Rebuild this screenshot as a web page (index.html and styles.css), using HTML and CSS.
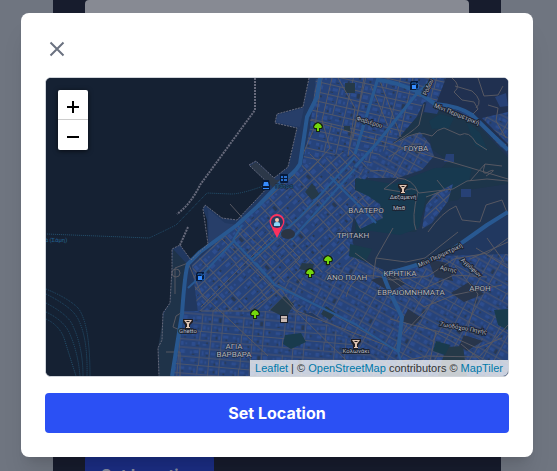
FILE: index.html
```html
<!DOCTYPE html>
<html lang="en">
<head>
<meta charset="utf-8">
<meta name="viewport" content="width=device-width, initial-scale=1">
<title>Set Location</title>
<link rel="stylesheet" href="styles.css">
</head>
<body>
<div class="page">
  <div class="page-column" aria-hidden="true">
    <div class="page-field"></div>
    <div class="page-button">Set Location</div>
  </div>
  <div class="overlay">
    <section class="dialog" role="dialog" aria-modal="true" aria-label="Set Location">
      <button class="close" type="button" aria-label="Close">
        <svg viewBox="0 0 24 24" aria-hidden="true"><path d="M5.500 5.500l13 13M18.500 5.500l-13 13"/></svg>
      </button>
      <div class="map">
        <svg class="tiles" viewBox="0 0 462 298" preserveAspectRatio="xMidYMid slice" role="img" aria-label="Map of the city and its harbour">
          <defs>
            <pattern id="blocks" width="46" height="38" patternUnits="userSpaceOnUse">
              <path fill="#26437b" d="M0 0h46v38H0z"/>
              <path fill="#2d4d8e" d="M2 2h3v3h-3zM7 3h2v5h-2zM13 2h5v3h-5zM20 5h2v3h-2zM25 2h4v2h-4zM32 3h2v4h-2zM37 2h6v3h-6zM3 12h4v4h-4zM10 11h2v3h-2zM15 13h4v2h-4zM25 11h3v5h-3zM30 13h3v2h-3zM37 12h3v4h-3zM42 13h2v2h-2zM2 22h2v3h-2zM6 21h5v3h-5zM15 21h2v5h-2zM19 22h3v2h-3zM25 22h5v3h-5zM37 21h5v4h-5zM3 31h5v3h-5zM14 31h3v4h-3zM19 32h2v3h-2zM26 31h3v2h-3zM31 32h3v3h-3zM38 31h3v4h-3z"/>
              <path fill="#283852" d="M5 6h2v2h-2zM17 6h3v1h-3zM29 4h2v3h-2zM40 6h2v2h-2zM8 15h3v1h-3zM19 11h2v2h-2zM33 15h2v1h-2zM4 25h3v1h-3zM20 25h2v2h-2zM31 21h3v5h-3zM8 34h2v1h-2zM29 34h2v2h-2zM41 31h2v2h-2z"/>
              <path fill="none" stroke="#50576a" d="M0 9.500h46M0 18.500h46M0 28.500h46M0 37.500h46M11.500 0v9M23.500 0v38M35.500 0v38M12.500 18v20"/>
            </pattern>
            <pattern id="north" href="#blocks" patternTransform="rotate(13)"/>
            <pattern id="centre" href="#blocks" patternTransform="rotate(-43)"/>
            <pattern id="east" href="#blocks" patternTransform="rotate(29) scale(.9)"/>
            <pattern id="south" href="#blocks" patternTransform="rotate(5) scale(.9)"/>
            <g id="tree"><path fill="#16230c" d="M-5 0Q-5-4 0-5Q5-4 5 0L4 2H2V5H-2V2H-4z"/><path fill="#73d70c" d="M-4 0Q-3-3 0-4Q3-3 4 0L3 1H1V4H-1V1H-3z"/></g>
            <g id="glass"><path fill="#211d22" d="M-5-5H5V-2L2 1V5H-3V1L-5-2z"/><path fill="#e0c5b4" d="M-4-4H4L1 0V3H2V4H-2V3H-1V0zM-2-3H2L1-2H-1z" fill-rule="evenodd"/></g>
            <g id="ferry-stop"><path fill="#071a3b" d="M-3-5H3L4-1V5H-4V-1z"/><path fill="#368cff" d="M-2-3H2L3 1H-3z"/><path stroke="#368cff" d="M-3 3.500H3"/></g>
            <g id="rail-stop"><rect x="-4" y="-5" width="8" height="9" rx="1" fill="#071a3b"/><path fill="#286ecb" d="M-3-3H-1V-1H-3zM0-3H3V-1H0zM-3 0H-1V2H-3zM0 0H3V2H0z"/></g>
            <g id="pump"><path fill="#071a3b" d="M-4-5H3V4H-5V-3z"/><path fill="#368cff" d="M-3-1H1V3H-3z"/><path fill="none" stroke="#2365b7" d="M-3-2V-3H1V-1M2-3Q5-2 3 3H1"/></g>
          </defs>
          <path fill="#152133" d="M0 0h462v298H0z"/>

          <path fill="#213860" d="M263 0L257 29 231 36 229 45 251 50 242 89 228 100 210 83 203 87 224 107 191 142 176 140 159 127 157 131 161 142 162 166 145 182 134 167 126 171 126 190 124 225 117 235 116 262 112 270 113 298H462V0z"/>
          <path fill="url(#north)" d="M270 0H462V66L330 132 254 96 264 50z"/>
          <path fill="url(#centre)" d="M254 88L309 70 350 130 350 200 300 235H152L146 187 191 145z"/>
          <path fill="url(#south)" d="M138 233H250L352 272 356 298H127z"/>
          <path fill="url(#east)" d="M229 207L330 180 462 176V298H350z"/>
          <path fill="url(#north)" d="M350 80L384 66 392 86 365 100 345 98z"/>

          <path fill="#1f3349" d="M127 171L140 185 135 238 126 298H113L112 270 118 235 124 225z"/>
          <path fill="#203451" d="M348 65L370 40 378 24 400 28 430 42 462 77V137L438 150 415 169 376 185 340 193 310 180 305 154 309 132 330 113 318 103z"/>
          <path fill="#1d354a" d="M370 40L384 32 405 36 430 45 462 80V106L421 112 412 122 380 127 370 154 309 152 309 101 343 112 361 101 392 94 402 83 386 71 383 56 350 65z"/>
          <path fill="#17394f" d="M310 100L347 106 389 90 426 89 423 103 399 115 380 120 373 150 354 157 325 153 310 160zM383 43L394 36 408 40 403 50 386 51zM420 43L434 55 442 73 429 68z"/>
          <path fill="#203050" d="M400 0H462V68L426 37 390 26z"/>
          <path fill="url(#east)" d="M345 66L374 54 384 66 388 78 376 92 352 100 322 100 318 92zM436 40L462 34V66zM305 88L322 92 309 101z"/>
          <path fill="url(#centre)" d="M388 116L407 106 402 123 386 145 376 151 380 127zM305 133L309 112 322 118 334 126 337 140 314 151z"/>
          <path fill="#274176" d="M381 22L395 27 391 36 378 34zM449 19L460 15 462 28 454 29zM400 76h8v8h-10zM415 111h10v8h-10z"/>

          <path fill="#253948" d="M266 105l8 12-8 5-7-8zM238 218l10 8-8 14-16-8zM256 185l12 1-2 8-13-3zM299 5h10v10h-10zM298 48h6v5h-6zM280 228l10 7-6 7-9-6zM400 269l17-1 4 30H392z"/>
          <path fill="#193b4d" d="M448 232l14-1v21l-10-5zM390 263l14 4-5 10-12-4zM239 257l16-2 5 9-15 7-8-5zM304 166l22 5-6 12-17-5z"/>
          <path fill="#28354b" d="M325 202l24-8 10 12-15 8zM382 181l20 4 5 18-18-4zM405 215l18-11 15 12-20 8zM362 231l14 9-8 8-12-5zM418 257l19 6-16 10-8-5z"/>
          <path fill="#273e69" d="M258 30L232 37 230 44 254 49zM162 131L179 145 192 147 172 163 163 164z"/>
          <path fill="#2c3849" d="M210 84L204 88 229 111 239 101 230 102z"/>

          <g class="minor-roads">
            <path d="M276 0L269 48 248 97 196 144M286 0L276 42 284 70 263 93M264 42L462 101M264 76L330 141M292 0L309 30 302 78M318 0L307 60M325 8L345 55M333 0L355 59"/>
            <path d="M143 187L155 215 222 278M155 233H203L235 211 251 233 352 272M142 185L129 190 129 216M138 233L130 238 127 249 136 253M120 274h14v24M155 229L229 155 254 180 204 231M184 126L257 207M191 147L229 182M173 158L302 284"/>
            <path d="M348 65Q365 55 373 47L378 26M354 63Q370 51 386 58Q391 51 398 50L414 57Q423 52 430 65L441 72M343 79Q363 64 375 66M324 93Q343 90 352 100L338 111 356 114Q367 107 373 115L407 111 421 103 441 101 462 103M352 100Q367 101 372 114Q365 140 370 152M424 103L439 86 456 88M439 86Q434 100 444 93Q453 90 440 98"/>
            <path d="M406 0Q416 8 408 14L416 22 428 24 432 31 425 38M409 8L426 13Q438 23 430 30M432 0L438 18 452 17 457 8M442 27L452 30 450 43 460 60M391 102L399 112 380 119M382 154Q396 134 410 128L416 142 434 144 440 127 456 122 462 137"/>
            <path d="M300 219Q308 188 345 202L382 198 408 181 442 175 462 160M309 175L353 207 378 229 408 217 456 207M344 241L398 255 431 270 456 260M353 284L381 278 433 279 462 247M409 188L432 216 419 258M327 200L330 180 347 150M330 180L360 184 379 180 412 154M340 194Q361 207 373 213L408 197 441 199M358 255L375 237 396 214M390 253L381 298M415 266L454 298M430 170L462 190M424 181L462 164M441 160L458 184"/>
            <circle cx="130" cy="195" r="4"/>
          </g>
          <g class="main-roads">
            <path stroke-width="4" d="M274 0L271 19 261 39 254 86Q248 96 237 102L211 129 191 147 154 174 142 186Q139 193 136 236L126 298"/>
            <path stroke-width="2" d="M142 210L154 199 189 162M187 162L229 207 309 246 352 274 360 298M196 147L187 162M206 181L254 139 309 79M245 162L309 91M332 0L309 76M388 0L372 14M229 207L210 185M284 99L330 145"/>
            <path stroke-width="3" d="M372 14L332 64 309 89M332 0L309 76"/>
            <path stroke-width="4" d="M332 2Q351 4 372 14L389 26Q413 28 426 37L462 72M462 134L441 147Q420 162 407 171Q376 188 337 196M337 196Q342 211 356 239L352 274"/>
          </g>
          <g class="coast">
            <path stroke-width="2" d="M209 0V32L154 107Q145 126 131 136M142 149L134 167"/>
            <path d="M263 0L257 29 231 36 229 45 251 50 242 89 228 100 210 83 203 87 224 107 191 142 176 140 159 127 157 131 162 166 145 182 134 167 126 171 126 190 124 225 117 235 116 262 112 270 113 298"/>
          </g>
          <path class="ferry" d="M220 107Q196 116 185 116L161 115 130 147Q114 155 103 160L0 156M0 211Q22 220 32 230Q44 245 44 298M0 216Q24 228 31 239Q42 258 41 298M0 225Q21 236 26 246Q37 268 37 298M0 234Q17 242 23 254Q32 274 34 298M0 241Q13 247 18 260L30 298"/>

          <ellipse cx="242" cy="156" rx="7" ry="5" fill="#2b3443"/>
          <g class="district">
            <text x="370" y="73">ΓΟΥΒΑ</text><text x="320" y="135">ΒΛΑΤΕΡΟ</text><text x="307" y="160">ΤΡΙΤΑΚΗ</text>
            <text x="301" y="202">ΑΝΟ ΠΟΛΗ</text><text x="354" y="198">ΚΡΗΤΙΚΑ</text><text x="365" y="217">ΕΒΡΑΙΟΜΝΗΜΑΤΑ</text>
            <text x="434" y="213">ΑΡΟΗ</text><text x="188" y="271">ΑΓΙΑ</text><text x="188" y="279">ΒΑΡΒΑΡΑ</text>
          </g>
          <g class="street">
            <text transform="translate(323 46) rotate(17)">Φαβιέρου</text><text transform="translate(384 10) rotate(-65)">Ρόδου</text>
            <text transform="translate(410 38) rotate(22)">Μίνι Περιμετρική</text><text transform="translate(395 179) rotate(-25)">Μίνι Περιμετρική</text>
            <text transform="translate(402 193) rotate(12)">Αρτης</text><text transform="translate(424 191) rotate(42)">Αγράφων</text>
            <text transform="translate(417 252) rotate(10)">Ζωοδόχου Πηγής</text><text x="357" y="121">Δεξαμενή</text><text x="353" y="132">Μπθ</text>
            <text x="142" y="255">Ghetto</text><text x="310" y="275">Κολωνάκι</text>
          </g>
          <g class="water-label"><text x="9" y="164">ιά (Σάμη)</text><text x="238" y="110">Πάτρα</text></g>
          <use href="#tree" x="272" y="49"/><use href="#tree" x="282" y="182"/><use href="#tree" x="264" y="195"/><use href="#tree" x="209" y="236"/>
          <use href="#ferry-stop" x="220" y="107"/><use href="#rail-stop" x="238" y="101"/><use href="#pump" x="155" y="199"/><use href="#pump" x="369" y="8"/>
          <use href="#glass" x="357" y="111"/><use href="#glass" x="142" y="246"/><use href="#glass" x="310" y="266"/>
          <path fill="#171c29" d="M234 237h8v8h-8z"/><path fill="#c9b9b2" d="M235 238h6v6h-6z"/><path stroke="#857c7d" d="M235 240.500h6"/>
          <g><path fill="#fb315e" d="M231 160L225 148A7.500 7.500 0 1 1 237 148z"/><circle cx="231" cy="144" r="6" fill="#263b62"/><circle cx="231" cy="142" r="2" fill="#f2c3aa"/><path fill="#8bd7f7" d="M228 148v-2q0-2 3-2t3 2v2z"/></g>
        </svg>
        <div class="zoom-control">
          <button type="button" aria-label="Zoom in"><svg viewBox="0 0 12 12" aria-hidden="true"><path d="M0 6h12M6 0v12"/></svg></button>
          <button type="button" aria-label="Zoom out"><svg viewBox="0 0 12 12" aria-hidden="true"><path d="M0 6h12"/></svg></button>
        </div>
        <div class="attribution"><a href="#leaflet">Leaflet</a> | © <a href="#osm">OpenStreetMap</a> contributors © <a href="#maptiler">MapTiler</a></div>
      </div>
      <button class="submit" type="button">Set Location</button>
    </section>
  </div>
</div>
</body>
</html>
```
FILE: styles.css
```css
* {
  box-sizing: border-box;
}

body {
  margin: 0;
  background: #6f7580;
  font-family: Inter, "Liberation Sans", sans-serif;
}

button {
  font: inherit;
  border: 0;
  padding: 0;
  cursor: pointer;
}

.page {
  display: grid;
  height: 100vh;
  padding-right: 3px;
  overflow: hidden;
}

.page-column,
.overlay {
  grid-area: 1 / 1;
  min-height: 0;
}

.page-column {
  display: flex;
  flex-direction: column;
  align-items: flex-start;
  justify-content: space-between;
  width: 100%;
  max-width: 448px;
  margin: 0 auto;
  padding: 0 32px;
  background: #171c2d;
}

.page-field {
  width: 100%;
  height: 80px;
  border-radius: 4px;
  background: #878a93;
}

.page-button {
  height: 14px;
  padding: 8px 16px;
  border-radius: 4px 4px 0 0;
  background: #1b2d83;
  color: #858b9f;
  font-weight: 700;
  font-size: 16px;
  line-height: 24px;
}

.overlay {
  padding-top: 13px;
}

.dialog {
  display: flex;
  flex-direction: column;
  gap: 16px;
  width: 100%;
  max-width: 512px;
  margin: 0 auto;
  padding: 24px;
  border-radius: 8px;
  background: #fff;
  box-shadow: 0 20px 25px -5px rgb(0 0 0 / 10%), 0 8px 10px -6px rgb(0 0 0 / 10%);
}

.close {
  width: 24px;
  height: 24px;
  background: none;
}

.close svg {
  display: block;
  fill: none;
  stroke: #6b7280;
  stroke-width: 2;
}

.map {
  position: relative;
  height: 300px;
  overflow: hidden;
  border: 1px solid #d1d5db;
  border-radius: 6px;
  background: #152133;
}

.tiles {
  display: block;
  width: 100%;
  height: 100%;
}

.minor-roads,
.main-roads,
.coast,
.ferry {
  fill: none;
  stroke-linejoin: round;
}

.minor-roads {
  stroke: #575862;
}

.main-roads {
  stroke: #285891;
}

.coast {
  stroke: #676a7b;
  stroke-dasharray: 2 1;
}

.ferry {
  stroke: #25526f;
  stroke-dasharray: 1 1;
}

.district,
.street,
.water-label {
  font-family: Roboto, "Noto Sans", sans-serif;
  font-size: 8px;
  text-anchor: middle;
  paint-order: stroke;
  stroke: #1c2434;
  stroke-width: 1px;
  fill: #b4b8c0;
}

.street {
  font-size: 6px;
  stroke-width: 2px;
}

.water-label {
  font-size: 6px;
  fill: #1c6092;
}

.zoom-control {
  position: absolute;
  top: 12px;
  left: 12px;
  display: flex;
  flex-direction: column;
  width: 30px;
  overflow: hidden;
  border-radius: 2px;
  box-shadow: 0 1px 5px rgb(0 0 0 / 65%);
}

.zoom-control button {
  display: grid;
  place-items: center;
  height: 30px;
  background: #fff;
}

.zoom-control button:first-child {
  border-bottom: 1px solid #ccc;
}

.zoom-control svg {
  width: 12px;
  height: 12px;
  margin-top: 4px;
  stroke: #000;
  stroke-width: 2;
}

.attribution {
  position: absolute;
  right: 0;
  bottom: 0;
  padding: 0 5px;
  background: rgb(255 255 255 / 75%);
  color: #333;
  font-family: "Liberation Sans", sans-serif;
  font-size: 11px;
  line-height: 16px;
  white-space: nowrap;
}

.attribution a {
  color: #0078a8;
  text-decoration: none;
}

.submit {
  height: 40px;
  border-radius: 4px;
  background: #2b50f4;
  color: #fff;
  font-weight: 700;
  font-size: 16px;
}
```
